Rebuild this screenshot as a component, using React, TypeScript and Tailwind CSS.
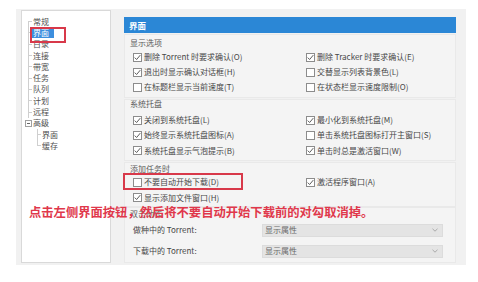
import React from "react";

function Check({ on }: { on: boolean }) {
  return (
    <span className="w-[9px] h-[9px] shrink-0 bg-white border border-[#8c8c8c] flex items-center justify-center">
      {on && (
        <svg width="7" height="7" viewBox="0 0 7 7">
          <path d="M0.7 3.6 L2.6 5.5 L6.3 1.1" fill="none" stroke="#4a4a4a" strokeWidth="0.9" />
        </svg>
      )}
    </span>
  );
}

function Opt({ on, label, h }: { on: boolean; label: string; h: string }) {
  return (
    <div className={"flex items-center gap-[2px] " + h}>
      <Check on={on} />
      <span className="whitespace-nowrap">{label}</span>
    </div>
  );
}

function Conn({ first, last }: { first?: boolean; last?: boolean }) {
  return (
    <span className="w-[4px] shrink-0 flex flex-col self-stretch">
      <span className={"flex-1 " + (first ? "" : "border-l border-[#cfcfcf]")} />
      <span className={"flex-1 border-t border-[#cfcfcf] " + (last ? "" : "border-l")} />
    </span>
  );
}

function Select() {
  return (
    <div className="w-[181px] h-[13px] bg-[#e4e4e4] border border-[#dcdcdc] flex items-center justify-between pl-[2px] pr-[4px] text-[#6a6a6a]">
      <span>显示属性</span>
      <svg width="6" height="4" viewBox="0 0 6 4">
        <path d="M0.5 0.8 L3 3.2 L5.5 0.8" fill="none" stroke="#9a9a9a" strokeWidth="0.8" />
      </svg>
    </div>
  );
}

export default function App() {
  const top = ["常规", "界面", "目录", "连接", "带宽", "任务", "队列", "计划", "远程"];
  return (
    <div className="relative w-[478px] h-[282px] bg-white overflow-hidden font-['Noto_Sans_CJK_SC','Noto_Sans',sans-serif] text-[8px] leading-none text-[#474747]">
      <div className="pt-[9px] pl-[16px]">
        <div className="w-[450px] h-[256px] bg-[#f1f1f1] flex">
          {/* tree */}
          <div className="ml-[5px] mt-[1px] w-[90px] h-[253px] bg-white border border-[#d9d9d9]">
            <div className="pt-[5px] pl-[6px] text-[#505050]">
              {top.map((t, i) => (
                <div key={i} className="h-[11.3px] flex items-stretch">
                  <Conn first={i === 0} />
                  {i === 1 ? (
                    <span className="self-center h-[11px] flex items-center bg-[#3d8fde] text-white pl-[1px] pr-[5px]">{t}</span>
                  ) : (
                    <span className="self-center ml-[1px]">{t}</span>
                  )}
                </div>
              ))}
              <div className="h-[11.3px] flex items-center">
                <span className="-ml-[3.5px] w-[7px] h-[7px] bg-white border border-[#a0a0a0] flex items-center justify-center">
                  <span className="w-[3px] border-t border-[#666]" />
                </span>
                <span className="ml-[1.5px]">高级</span>
              </div>
              <div className="pl-[9px]">
                {["界面", "缓存"].map((t, i) => (
                  <div key={i} className="h-[11.3px] flex items-stretch">
                    <Conn last={i === 1} />
                    <span className="self-center ml-[1px]">{t}</span>
                  </div>
                ))}
              </div>
            </div>
          </div>

          {/* right content */}
          <div className="flex-1 pl-[13px] pr-[10px] pt-[8px] flex flex-col">
            <div className="h-[19px] bg-[#2b87d6] flex items-center pl-[5px] text-white font-bold text-[8.5px]">界面</div>

            {/* section 1 */}
            <div className="mt-[1px] pt-[2px] pb-[2px] border border-[#e9e9e9] bg-[#f4f4f4]">
              <div className="h-[12px] flex items-center pl-[5px] text-[#5a5a5a]">显示选项</div>
              <div className="grid grid-cols-[173px_1fr] pl-[8px] mt-[1px]">
                <Opt on label="删除 Torrent 时要求确认(O)" h="h-[15px]" />
                <Opt on label="删除 Tracker 时要求确认(E)" h="h-[15px]" />
                <Opt on label="退出时显示确认对话框(H)" h="h-[15px]" />
                <Opt on={false} label="交替显示列表背景色(L)" h="h-[15px]" />
                <Opt on={false} label="在标题栏显示当前速度(T)" h="h-[15px]" />
                <Opt on={false} label="在状态栏显示速度限制(O)" h="h-[15px]" />
              </div>
            </div>

            {/* section 2 */}
            <div className="mt-[1px] pt-[0px] pb-[1px] border border-[#e9e9e9] bg-[#f4f4f4]">
              <div className="h-[9px] flex items-center pl-[5px] text-[#5a5a5a]">系统托盘</div>
              <div className="grid grid-cols-[173px_1fr] pl-[8px] mt-[4px]">
                <Opt on label="关闭到系统托盘(L)" h="h-[15px]" />
                <Opt on label="最小化到系统托盘(M)" h="h-[15px]" />
                <Opt on label="始终显示系统托盘图标(A)" h="h-[15.5px]" />
                <Opt on={false} label="单击系统托盘图标打开主窗口(S)" h="h-[15.5px]" />
                <Opt on label="系统托盘显示气泡提示(B)" h="h-[15.5px]" />
                <Opt on label="单击时总是激活窗口(W)" h="h-[15.5px]" />
              </div>
            </div>

            {/* section 3 */}
            <div className="mt-[1px] pt-[2px] border border-[#e9e9e9] bg-[#f4f4f4]">
              <div className="h-[8px] flex items-center pl-[5px] text-[#5a5a5a]">添加任务时</div>
              <div className="grid grid-cols-[173px_1fr] pl-[8px] mt-[2px]">
                <Opt on={false} label="不要自动开始下载(D)" h="h-[15px]" />
                <Opt on label="激活程序窗口(A)" h="h-[15px]" />
                <Opt on label="显示添加文件窗口(H)" h="h-[16px]" />
                <div />
              </div>
            </div>

            {/* section 4 */}
            <div className="pt-[2px] flex-1 border border-[#e9e9e9] bg-[#f4f4f4]">
              <div className="h-[8px] flex items-center pl-[5px] text-[#5a5a5a]">双击动作</div>
              <div className="pl-[8px] mt-[2px]">
                <div className="h-[21px] flex items-center">
                  <span className="w-[129px]">做种中的 Torrent:</span>
                  <Select />
                </div>
                <div className="h-[21px] flex items-center">
                  <span className="w-[129px]">下载中的 Torrent:</span>
                  <Select />
                </div>
              </div>
            </div>
            <div className="h-[3px]" />
          </div>
        </div>
      </div>

      {/* annotations */}
      <div className="absolute left-[30px] top-[27px] w-[36px] h-[16px] border-2 border-[#d8394a]" />
      <div className="absolute left-[123px] top-[173px] w-[120px] h-[17px] border-2 border-[#d8394a]" />
      <div className="absolute left-[29px] top-[205px] text-[12.3px] leading-[15px] font-bold text-[#e0384b] whitespace-nowrap">
        点击左侧界面按钮，然后将不要自动开始下载前的对勾取消掉。
      </div>
    </div>
  );
}
